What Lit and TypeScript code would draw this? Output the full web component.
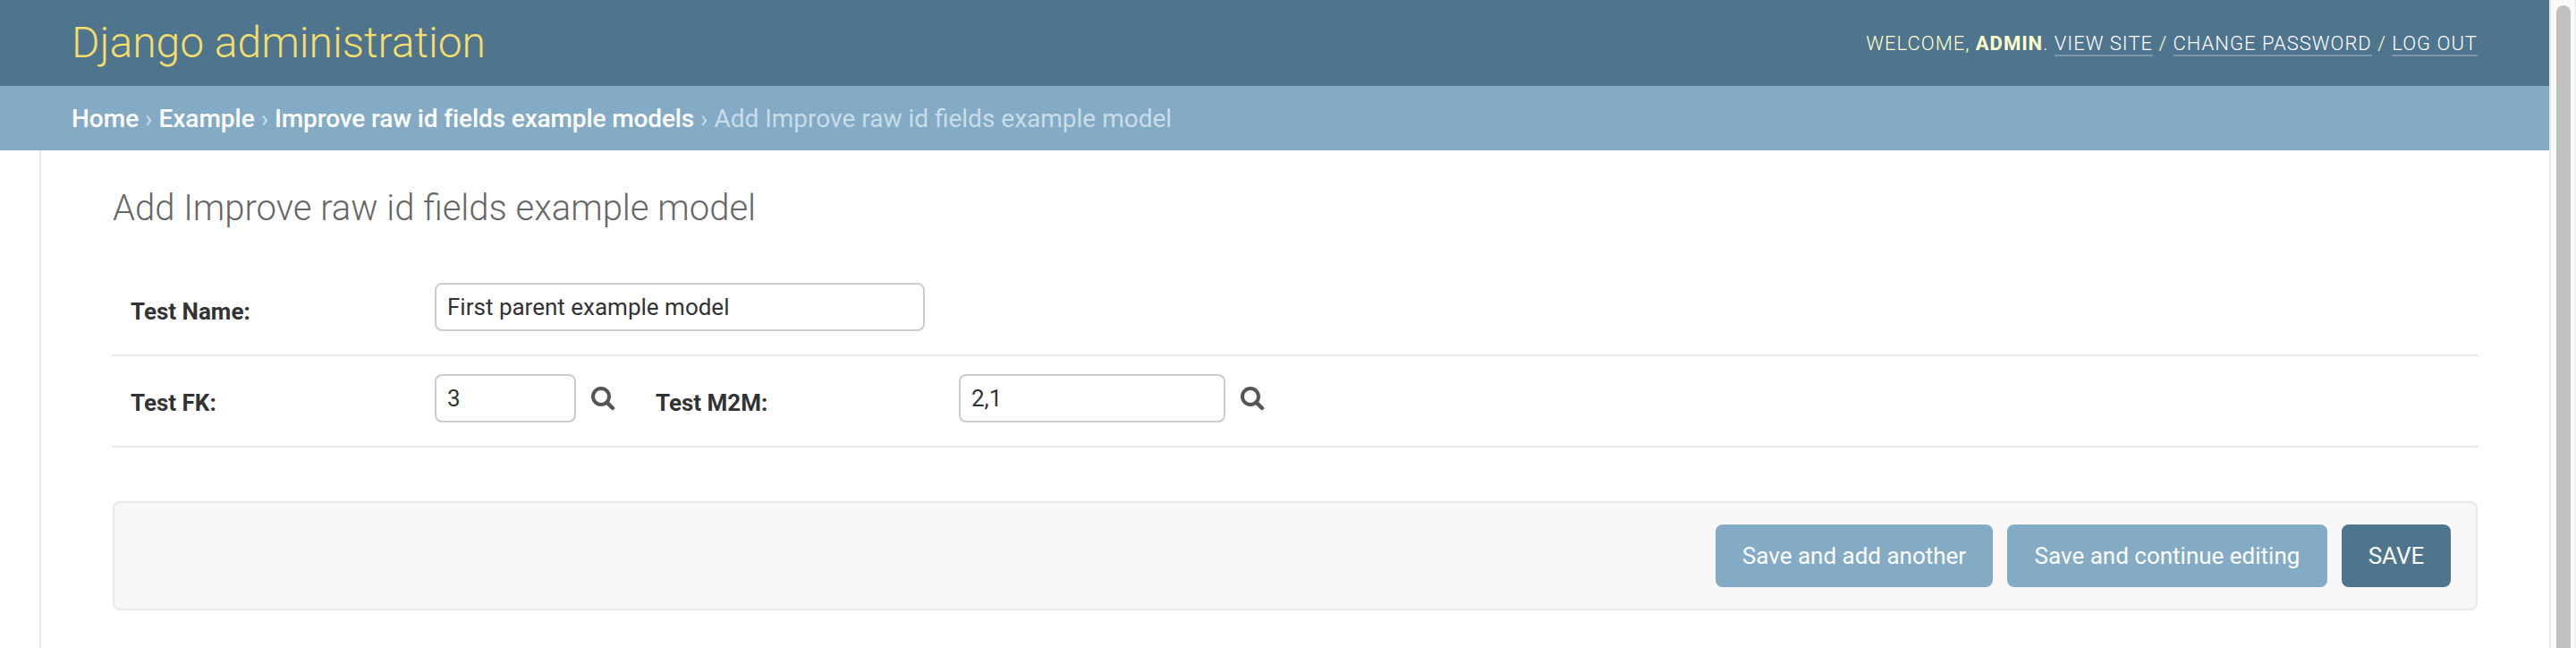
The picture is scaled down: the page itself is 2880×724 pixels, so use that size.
import { LitElement, html, css } from "lit";
import { customElement } from "lit/decorators.js";

@customElement("app-root")
export class AppRoot extends LitElement {
  static styles = css`
    :host {
      display: flex;
      height: 724px;
      overflow: hidden;
      background: #fff;
      color: #333;
      font-family: Roboto, "Liberation Sans", sans-serif;
      font-size: 28px;
    }
    * {
      box-sizing: border-box;
    }
    a {
      color: #fff;
      text-decoration: none;
    }
    .page {
      flex: 1;
      display: flex;
      flex-direction: column;
    }
    .header {
      height: 96px;
      padding: 0 80px;
      background: #4f748d;
      display: flex;
      align-items: center;
      justify-content: space-between;
    }
    .brand {
      margin: 0;
      font-size: 48px;
      line-height: 56px;
      font-weight: 300;
      color: #f4dd6a;
    }
    .tools {
      padding-top: 2px;
      font-size: 22px;
      line-height: 30px;
      font-weight: 300;
      letter-spacing: 1px;
      color: #ffc;
      text-transform: uppercase;
      white-space: nowrap;
    }
    .tools strong {
      font-weight: 700;
    }
    .tools a {
      border-bottom: 2px solid #7d98ab;
    }
    .crumbs {
      height: 72px;
      padding: 1px 80px 0;
      background: #84abc5;
      color: #c9dce8;
      line-height: 71px;
      white-space: nowrap;
    }
    .crumbs a {
      font-weight: 500;
    }
    .crumbs a:last-of-type {
      letter-spacing: -0.12px;
    }
    .main {
      flex: 1;
      margin-left: 44px;
      border-left: 2px solid #e6e6e6;
      padding: 41px 80px 0;
    }
    .title {
      margin: 0 0 35px;
      font-size: 40px;
      line-height: 48px;
      font-weight: 300;
      color: #666;
    }
    .row {
      height: 102px;
      padding: 20px 20px 0;
      display: flex;
      align-items: flex-start;
      border-bottom: 2px solid #e8e8e8;
    }
    .row:first-of-type {
      height: 106px;
      padding-top: 24px;
    }
    label {
      width: 340px;
      padding-top: 16px;
      font-size: 26px;
      line-height: 32px;
      font-weight: 700;
    }
    .lookup + label {
      width: 339px;
    }
    input {
      height: 54px;
      padding: 0 12px;
      border: 2px solid #ccc;
      border-radius: 8px;
      background: #fff;
      color: #333;
      font: 400 26px Roboto, sans-serif;
      outline: none;
    }
    .name {
      width: 548px;
    }
    .fk {
      width: 158px;
    }
    .m2m {
      width: 298px;
    }
    .lookup {
      margin: 14px 45px 0 17px;
      width: 27px;
      height: 27px;
    }
    .submit {
      margin-top: 60px;
      height: 122px;
      padding: 24px 28px;
      border: 2px solid #e8e8e8;
      border-radius: 8px;
      background: #f8f8f8;
      display: flex;
      justify-content: flex-end;
      gap: 16px;
    }
    button {
      width: 310px;
      height: 70px;
      padding: 0;
      border: 0;
      border-radius: 8px;
      background: #84abc5;
      color: #fff;
      font: 400 26px Roboto, sans-serif;
      white-space: nowrap;
    }
    .wide {
      width: 358px;
    }
    .primary {
      width: 122px;
      background: #4f748d;
      text-transform: uppercase;
    }
    .scroll {
      width: 30px;
      padding: 6px 4px 0 6px;
      background: #fafafa;
      border-left: 2px solid #e8e8e8;
      border-right: 2px solid #f0f0f0;
    }
    .thumb {
      width: 16px;
      height: 740px;
      border-radius: 8px;
      background: #c1c1c1;
    }
  `;

  private lookup() {
    return html`<svg class="lookup" viewBox="0 0 27 27" fill="none" stroke="#555">
      <circle cx="11" cy="11" r="9" stroke-width="4" />
      <path d="M17.6 17.6 L24 24" stroke-width="4.4" stroke-linecap="round" />
    </svg>`;
  }

  render() {
    return html`
      <div class="page">
        <header class="header">
          <h1 class="brand">Django administration</h1>
          <div class="tools">
            Welcome, <strong>admin</strong>. <a>View site</a> / <a>Change password</a> / <a>Log out</a>
          </div>
        </header>
        <nav class="crumbs">
          <a>Home</a> › <a>Example</a> › <a>Improve raw id fields example models</a> › Add Improve raw id fields example model
        </nav>
        <main class="main">
          <h2 class="title">Add Improve raw id fields example model</h2>
          <div class="row">
            <label>Test Name:</label>
            <input class="name" .value=${"First parent example model"} />
          </div>
          <div class="row">
            <label>Test FK:</label>
            <input class="fk" .value=${"3"} />
            ${this.lookup()}
            <label>Test M2M:</label>
            <input class="m2m" .value=${"2,1"} />
            ${this.lookup()}
          </div>
          <div class="submit">
            <button>Save and add another</button>
            <button class="wide">Save and continue editing</button>
            <button class="primary">Save</button>
          </div>
        </main>
      </div>
      <div class="scroll"><div class="thumb"></div></div>
    `;
  }
}
